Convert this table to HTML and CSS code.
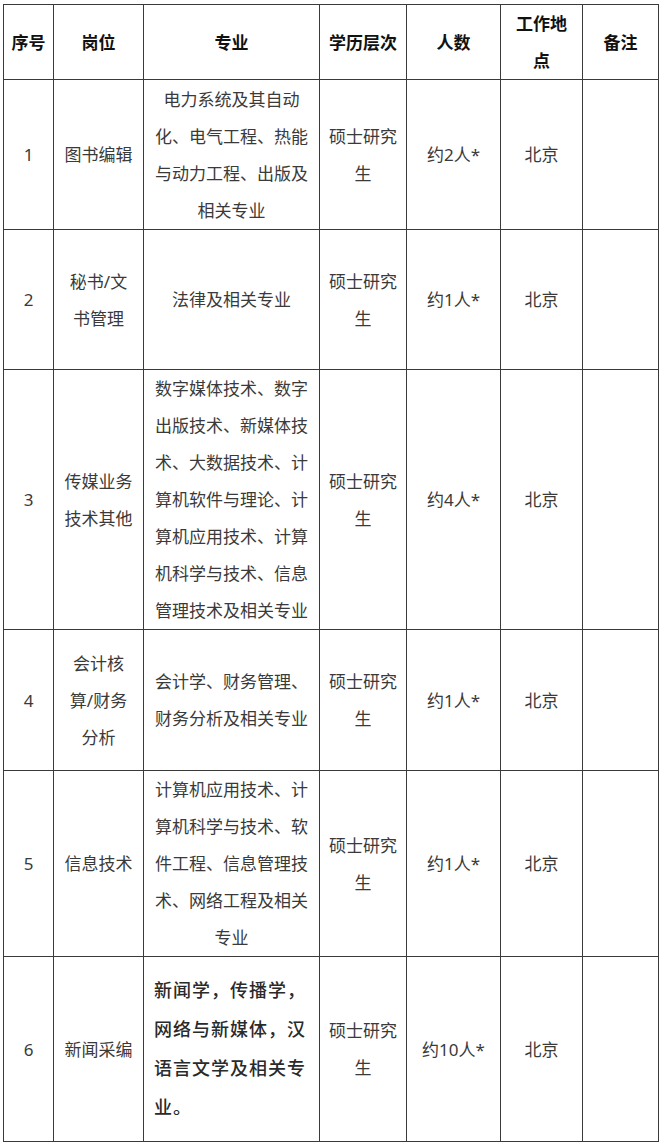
FILE: index.html
```html
<!DOCTYPE html>
<html lang="zh-CN">
<head>
<meta charset="utf-8">
<title>岗位表</title>
<link rel="stylesheet" href="styles.css">
</head>
<body>
<table class="jobs">
  <colgroup>
    <col class="c1"><col class="c2"><col class="c3"><col class="c4"><col class="c5"><col class="c6"><col class="c7">
  </colgroup>
  <thead>
    <tr class="r-head">
      <th>序号</th><th>岗位</th><th>专业</th><th>学历层次</th><th>人数</th><th>工作地<br>点</th><th>备注</th>
    </tr>
  </thead>
  <tbody>
    <tr class="r1">
      <td>1</td>
      <td>图书编辑</td>
      <td>电力系统及其自动<br>化、电气工程、热能<br>与动力工程、出版及<br>相关专业</td>
      <td>硕士研究<br>生</td>
      <td>约2人*</td>
      <td>北京</td>
      <td></td>
    </tr>
    <tr class="r2">
      <td>2</td>
      <td>秘书/文<br>书管理</td>
      <td>法律及相关专业</td>
      <td>硕士研究<br>生</td>
      <td>约1人*</td>
      <td>北京</td>
      <td></td>
    </tr>
    <tr class="r3">
      <td>3</td>
      <td>传媒业务<br>技术其他</td>
      <td>数字媒体技术、数字<br>出版技术、新媒体技<br>术、大数据技术、计<br>算机软件与理论、计<br>算机应用技术、计算<br>机科学与技术、信息<br>管理技术及相关专业</td>
      <td>硕士研究<br>生</td>
      <td>约4人*</td>
      <td>北京</td>
      <td></td>
    </tr>
    <tr class="r4">
      <td>4</td>
      <td>会计核<br>算/财务<br>分析</td>
      <td>会计学、财务管理、<br>财务分析及相关专业</td>
      <td>硕士研究<br>生</td>
      <td>约1人*</td>
      <td>北京</td>
      <td></td>
    </tr>
    <tr class="r5">
      <td>5</td>
      <td>信息技术</td>
      <td>计算机应用技术、计<br>算机科学与技术、软<br>件工程、信息管理技<br>术、网络工程及相关<br>专业</td>
      <td>硕士研究<br>生</td>
      <td>约1人*</td>
      <td>北京</td>
      <td></td>
    </tr>
    <tr class="r6">
      <td>6</td>
      <td>新闻采编</td>
      <td class="spec-left">新闻学，传播学，<br>网络与新媒体，汉<br>语言文学及相关专<br>业。</td>
      <td>硕士研究<br>生</td>
      <td>约10人*</td>
      <td>北京</td>
      <td></td>
    </tr>
  </tbody>
</table>
</body>
</html>
```

FILE: styles.css
```css
html, body {
  margin: 0;
  padding: 0;
  background: #ffffff;
}

body {
  font-family: "Noto Sans", "Noto Sans CJK SC", sans-serif;
  color: #333333;
}

.jobs {
  border-collapse: collapse;
  table-layout: fixed;
  width: 656px;
  margin: 4px 0 0 3px;
}

.c1 { width: 50px; }
.c2 { width: 90px; }
.c3 { width: 176px; }
.c4 { width: 87px; }
.c5 { width: 94px; }
.c6 { width: 82px; }
.c7 { width: 76px; }

.jobs th,
.jobs td {
  border: 1px solid #3a3a3a;
  padding: 0 4px;
  text-align: center;
  vertical-align: middle;
  font-size: 17px;
  line-height: 37px;
  white-space: nowrap;
}

.jobs th {
  font-weight: 700;
  color: #111111;
}

.jobs td {
  font-weight: 400;
  color: #3a3a3a;
}

.r-head th { height: 72px; }
.r1 td { height: 149px; }
.r2 td { height: 139px; }
.r3 td { height: 258px; }
.r4 td { height: 140px; }
.r5 td { height: 184px; }
.r6 td { height: 184px; }

.jobs td.spec-left {
  text-align: left;
  padding-left: 10px;
  font-size: 18px;
  line-height: 39px;
  letter-spacing: 1px;
  font-weight: 500;
  color: #2a2a2a;
}
```
